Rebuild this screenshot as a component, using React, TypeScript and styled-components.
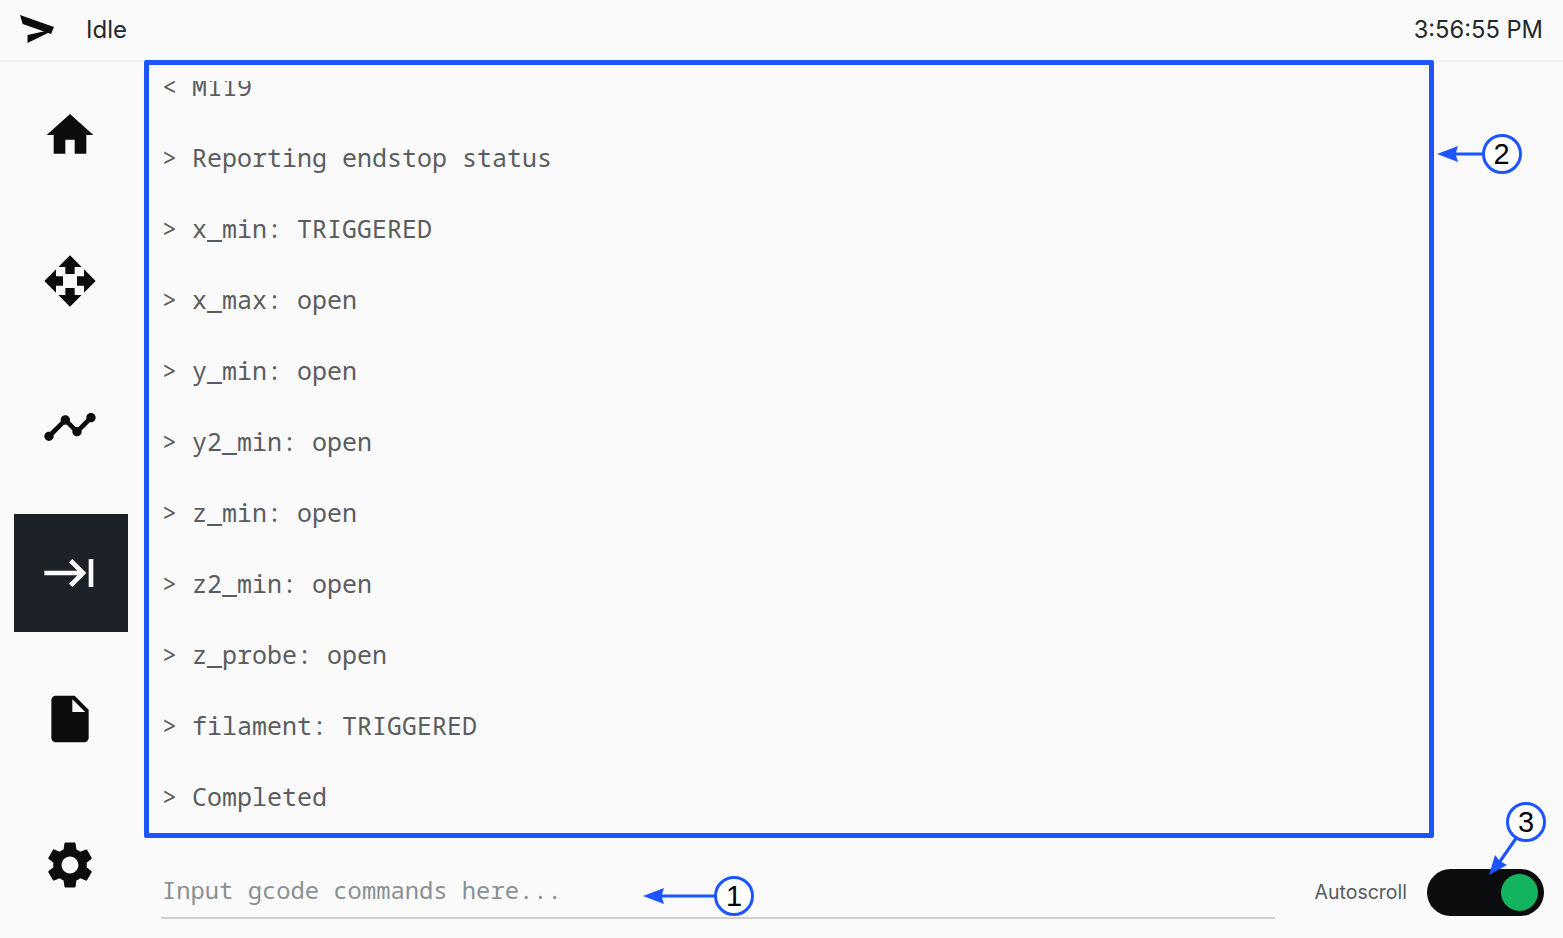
import React from "react";
import styled, { createGlobalStyle } from "styled-components";

const Global = createGlobalStyle`
  html, body { margin: 0; padding: 0; background: #fafafa; overflow: hidden; }
  * { box-sizing: border-box; }
`;

const Page = styled.div`
  position: relative;
  width: 1563px;
  height: 938px;
  display: flex;
  flex-direction: column;
  background: #fafafa;
  font-family: Inter, "Liberation Sans", sans-serif;
  color: #23282d;
  overflow: hidden;
`;

const Header = styled.header`
  height: 62px;
  flex: none;
  display: flex;
  align-items: center;
  padding: 0 20px 2px 20px;
  border-bottom: 2px solid #f1f1f1;
`;

const Logo = styled.svg`
  width: 36px;
  height: 32px;
  flex: none;
`;

const Status = styled.span`
  margin-left: 30px;
  font-size: 24px;
  flex: 1;
`;

const Clock = styled.span`
  font-size: 23.7px;
`;

const Body = styled.div`
  flex: 1;
  display: flex;
  min-height: 0;
`;

const Sidebar = styled.nav`
  width: 144px;
  flex: none;
  display: grid;
  grid-template-rows: repeat(6, 146px);
`;

const NavItem = styled.div<{ $active?: boolean }>`
  margin: 14px 16px 14px 14px;
  display: flex;
  align-items: center;
  justify-content: center;
  background: ${(p) => (p.$active ? "#1c2127" : "transparent")};
  color: ${(p) => (p.$active ? "#fafafa" : "#0b0c0e")};
  padding-right: 2px;
`;

const Icon = styled.svg`
  width: 56px;
  height: 56px;
  fill: currentColor;
`;

const Content = styled.main`
  flex: 1;
  min-width: 0;
  display: flex;
  flex-direction: column;
`;

const LogViewport = styled.div`
  margin: 19px 133px 0 18px;
  height: 752px;
  overflow: hidden;
`;

const LogList = styled.div`
  margin-top: -30.5px;
  font-family: "Noto Sans Mono", "DejaVu Sans Mono", monospace;
  font-size: 25px;
  color: #5a5d60;
`;

const LogLine = styled.div`
  height: 71px;
  line-height: 71px;
  white-space: pre;
`;

const Footer = styled.div`
  flex: 1;
  display: flex;
  align-items: flex-start;
  padding: 36px 19px 0 17px;
`;

const CommandInput = styled.input`
  flex: 1;
  height: 50px;
  margin-right: 40px;
  padding: 0 0 6px 1px;
  border: 0;
  border-bottom: 2px solid #cfcfcf;
  background: transparent;
  outline: none;
  font-family: "Noto Sans Mono", "DejaVu Sans Mono", monospace;
  font-size: 23.8px;
  color: #5a5d60;
  &::placeholder { color: #8a8f94; opacity: 1; }
`;

const ToggleLabel = styled.span`
  font-size: 19.5px;
  color: #555a5e;
  margin-right: 20px;
  line-height: 47px;
`;

const Toggle = styled.div`
  position: relative;
  width: 117px;
  height: 47px;
  border-radius: 24px;
  background: #0b0c0e;
  flex: none;
`;

const Thumb = styled.span`
  position: absolute;
  top: 5px;
  right: 6px;
  width: 37px;
  height: 37px;
  border-radius: 50%;
  background: #14b35f;
`;

const Frame = styled.div`
  position: absolute;
  left: 144px;
  top: 60px;
  width: 1290px;
  height: 778px;
  border: 5.5px solid #1c55ff;
  border-radius: 2px;
  pointer-events: none;
`;

const Callout = styled.div<{ $x: number; $y: number }>`
  position: absolute;
  left: ${(p) => p.$x - 20}px;
  top: ${(p) => p.$y - 20}px;
  width: 40px;
  height: 40px;
  border-radius: 50%;
  border: 3px solid #1c55ff;
  background: #fff;
  color: #000;
  font-family: "Liberation Sans", sans-serif;
  font-size: 29px;
  display: flex;
  align-items: center;
  justify-content: center;
`;

const ArrowLayer = styled.svg`
  position: absolute;
  left: 0;
  top: 0;
  width: 1563px;
  height: 938px;
  pointer-events: none;
`;

const lines = [
  "< M119",
  "> Reporting endstop status",
  "> x_min: TRIGGERED",
  "> x_max: open",
  "> y_min: open",
  "> y2_min: open",
  "> z_min: open",
  "> z2_min: open",
  "> z_probe: open",
  "> filament: TRIGGERED",
  "> Completed",
];

const icons = [
  "M10 20v-6h4v6h5v-8h3L12 3 2 12h3v8z",
  "M10 9h4V6h3l-5-5-5 5h3v3zm-1 1H6V7l-5 5 5 5v-3h3v-4zm14 2l-5-5v3h-3v4h3v3l5-5zm-9 3h-4v3H7l5 5 5-5h-3v-3z",
  "M23 8c0 1.1-.9 2-2 2-.18 0-.35-.02-.51-.07l-3.56 3.55c.05.16.07.34.07.52 0 1.1-.9 2-2 2s-2-.9-2-2c0-.18.02-.36.07-.52l-2.55-2.55c-.16.05-.34.07-.52.07s-.36-.02-.52-.07l-4.55 4.56c.05.16.07.33.07.51 0 1.1-.9 2-2 2s-2-.9-2-2 .9-2 2-2c.18 0 .35.02.51.07l4.56-4.55C8.02 9.36 8 9.18 8 9c0-1.1.9-2 2-2s2 .9 2 2c0 .18-.02.36-.07.52l2.55 2.55c.16-.05.34-.07.52-.07s.36.02.52.07l3.55-3.56C19.02 8.35 19 8.18 19 8c0-1.1.9-2 2-2s2 .9 2 2z",
  "M11.59 7.41L15.17 11H1v2h14.17l-3.59 3.58L13 18l6-6-6-6-1.41 1.41zM20 6v12h2V6h-2z",
  "M6 2c-1.1 0-1.99.9-1.99 2L4 20c0 1.1.89 2 1.99 2H18c1.1 0 2-.9 2-2V8l-6-6H6zm7 7V3.5L18.5 9H13z",
  "M19.14 12.94c.04-.3.06-.61.06-.94 0-.32-.02-.64-.07-.94l2.03-1.58c.18-.14.23-.41.12-.61l-1.92-3.32c-.12-.22-.37-.29-.59-.22l-2.39.96c-.5-.38-1.03-.7-1.62-.94l-.36-2.54c-.04-.24-.24-.41-.48-.41h-3.84c-.24 0-.43.17-.47.41l-.36 2.54c-.59.24-1.13.57-1.62.94l-2.39-.96c-.22-.08-.47 0-.59.22L2.74 8.87c-.12.21-.08.47.12.61l2.03 1.58c-.05.3-.09.63-.09.94s.02.64.07.94l-2.03 1.58c-.18.14-.23.41-.12.61l1.92 3.32c.12.22.37.29.59.22l2.39-.96c.5.38 1.03.7 1.62.94l.36 2.54c.05.24.24.41.48.41h3.84c.24 0 .44-.17.47-.41l.36-2.54c.59-.24 1.13-.56 1.62-.94l2.39.96c.22.08.47 0 .59-.22l1.92-3.32c.12-.22.07-.47-.12-.61l-2.01-1.58zM12 15.6c-1.98 0-3.6-1.62-3.6-3.6s1.62-3.6 3.6-3.6 3.6 1.62 3.6 3.6-1.62 3.6-3.6 3.6z",
];

export default function App() {
  return (
    <Page>
      <Global />
      <Header>
        <Logo viewBox="0 0 36 32">
          <path d="M0 2 L34 14 L31 21 L2.7 11 Z" fill="#0b0c0e" />
          <path d="M7.5 22 L28 17.5 L29 19.5 L7.5 30 Z" fill="#0b0c0e" />
        </Logo>
        <Status>Idle</Status>
        <Clock>3:56:55 PM</Clock>
      </Header>
      <Body>
        <Sidebar>
          {icons.map((d, i) => (
            <NavItem key={i} $active={i === 3}>
              <Icon viewBox="0 0 24 24">
                <path d={d} />
              </Icon>
            </NavItem>
          ))}
        </Sidebar>
        <Content>
          <LogViewport>
            <LogList>
              {lines.map((l, i) => (
                <LogLine key={i}>{l}</LogLine>
              ))}
            </LogList>
          </LogViewport>
          <Footer>
            <CommandInput placeholder="Input gcode commands here..." readOnly />
            <ToggleLabel>Autoscroll</ToggleLabel>
            <Toggle>
              <Thumb />
            </Toggle>
          </Footer>
        </Content>
      </Body>
      <Frame />
      <ArrowLayer viewBox="0 0 1563 938">
        <g fill="#1c55ff" stroke="none">
          <path d="M643 896 L664 888 L662 894.5 H716 V897.5 H662 L664 904 Z" />
          <path d="M1437 154 L1458 146 L1456 152.5 H1484 V155.5 H1456 L1458 162 Z" />
          <path d="M1489 875 L1495 855 L1499 860 L1515 837 L1517.5 839 L1501.5 862 L1507 865 Z" />
        </g>
      </ArrowLayer>
      <Callout $x={734} $y={896}>1</Callout>
      <Callout $x={1501.5} $y={154}>2</Callout>
      <Callout $x={1526} $y={822}>3</Callout>
    </Page>
  );
}
